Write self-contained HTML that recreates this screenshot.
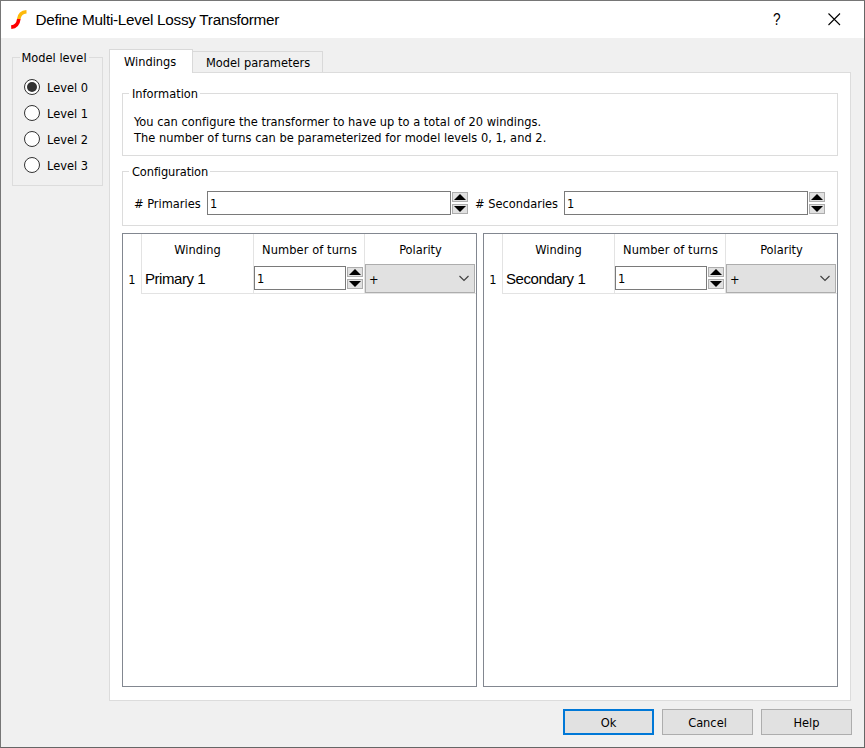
<!DOCTYPE html>
<html>
<head>
<meta charset="utf-8">
<title>Define Multi-Level Lossy Transformer</title>
<style>
html,body{margin:0;padding:0;}
body{width:865px;height:748px;overflow:hidden;background:#f0f0f0;position:relative;
  font-family:"DejaVu Sans Condensed","DejaVu Sans","Liberation Sans",sans-serif;font-size:12.7px;color:#000;}
.abs{position:absolute;box-sizing:border-box;}
.t{position:absolute;white-space:pre;line-height:16px;height:16px;}
.seg{font-family:"Liberation Sans",sans-serif;}
#win{left:0;top:0;width:865px;height:748px;border:1px solid #767676;border-right-color:#666;border-bottom-color:#666;}
#inner{left:1px;top:1px;width:863px;height:746px;border-right:1px solid #fafafa;border-bottom:1px solid #fafafa;}
#titlebar{left:1px;top:1px;width:863px;height:37px;background:#fff;}
.gb{border:1px solid #dcdcdc;}
.gbl{background:#f0f0f0;padding:0 3px;}
.gblw{background:#fff;padding:0 2px 0 3px;}
#pane{left:109px;top:72px;width:742px;height:629px;background:#fff;border:1px solid #dcdcdc;}
.tab{border:1px solid #d9d9d9;border-bottom:none;}
.spin{background:#fff;border:1px solid #7a7a7a;}
.sb{background:#e1e1e1;border:1px solid #adadad;width:16px;height:10px;}
.tbl{background:#fff;border:1px solid #828790;}
.vl{width:1px;background:#e3e3e3;}
.hl{height:1px;background:#e3e3e3;}
.combo{background:#e1e1e1;border:1px solid #adadad;}
.btn{background:#e1e1e1;border:1px solid #adadad;height:26px;width:91px;text-align:center;}
.radio{width:16px;height:16px;border-radius:50%;border:1px solid #333;background:#fff;}
.dot{width:10px;height:10px;border-radius:50%;background:#333;left:2px;top:2px;}
svg{position:absolute;overflow:visible;}
</style>
</head>
<body>
<!-- window chrome -->
<div class="abs" id="titlebar"></div>

<div class="abs" id="win"></div>

<!-- app icon -->
<svg style="left:0;top:0" width="40" height="38" viewBox="0 0 40 38">
  <defs>
    <clipPath id="cu"><rect x="0" y="0" width="40" height="19"/></clipPath>
    <clipPath id="cl"><rect x="0" y="19" width="40" height="19"/></clipPath>
  </defs>
  <path clip-path="url(#cl)" d="M11.2 27.1 C15.8 26.8 18.2 24.2 18.8 19 C19.4 14.2 22 11.9 26.5 11.7" fill="none" stroke="#fe0000" stroke-width="3.6"/>
  <path clip-path="url(#cu)" d="M11.2 27.1 C15.8 26.8 18.2 24.2 18.8 19 C19.4 14.2 22 11.9 26.5 11.7" fill="none" stroke="#fdb90b" stroke-width="3.6"/>
</svg>
<div class="t seg" id="title" style="left:35.5px;top:11px;font-size:15.3px;letter-spacing:-0.27px;line-height:18px;height:18px;">Define Multi-Level Lossy Transformer</div>

<!-- caption buttons -->
<div class="t seg" id="qm" style="left:773px;top:11px;font-size:17px;line-height:18px;height:18px;transform:scaleX(0.8);transform-origin:0 0;">?</div>
<svg style="left:0;top:0" width="865" height="38" viewBox="0 0 865 38">
  <path d="M828.5 13.5 L840 25 M840 13.5 L828.5 25" fill="none" stroke="#000" stroke-width="1.1"/>
</svg>

<!-- Model level group -->
<div class="abs gb" style="left:12px;top:57px;width:91px;height:129px;"></div>
<div class="t gbl" id="gl_model" style="left:20px;top:50px;padding:0 2px 0 1.5px;">Model level</div>

<div class="abs radio" style="left:24px;top:79px;"><div class="abs dot"></div></div>
<div class="t" id="lv0" style="left:47px;top:80px;">Level 0</div>
<div class="abs radio" style="left:24px;top:105px;"></div>
<div class="t" id="lv1" style="left:47px;top:106px;">Level 1</div>
<div class="abs radio" style="left:24px;top:131px;"></div>
<div class="t" id="lv2" style="left:47px;top:132px;">Level 2</div>
<div class="abs radio" style="left:24px;top:157px;"></div>
<div class="t" id="lv3" style="left:47px;top:158px;">Level 3</div>

<!-- Tabs -->
<div class="abs" id="pane"></div>
<div class="abs tab" style="left:192px;top:51px;width:131px;height:21px;background:#f0f0f0;border-left:none;"></div>
<div class="abs tab" style="left:109px;top:49px;width:84px;height:24px;background:#fff;"></div>
<div class="t" id="tab1" style="left:124px;top:54px;">Windings</div>
<div class="t" id="tab2" style="left:206px;top:55px;">Model parameters</div>

<!-- Information group -->
<div class="abs gb" style="left:122px;top:93px;width:716px;height:63px;"></div>
<div class="t gblw" id="gl_info" style="left:129px;top:86px;">Information</div>
<div class="t" id="info1" style="left:134px;top:114px;letter-spacing:0.025px;">You can configure the transformer to have up to a total of 20 windings.</div>
<div class="t" id="info2" style="left:134px;top:130px;letter-spacing:0.03px;">The number of turns can be parameterized for model levels 0, 1, and 2.</div>

<!-- Configuration group -->
<div class="abs gb" style="left:122px;top:171px;width:716px;height:55px;"></div>
<div class="t gblw" id="gl_conf" style="left:129px;top:164px;letter-spacing:-0.1px;">Configuration</div>
<div class="t" id="lprim" style="left:134px;top:196px;"># Primaries</div>
<div class="abs spin" style="left:207px;top:191px;width:244px;height:24px;"></div>
<div class="t" id="sp1" style="left:210px;top:196px;">1</div>
<div class="abs sb" style="left:452px;top:192px;"></div>
<div class="abs sb" style="left:452px;top:204px;"></div>
<div class="t" id="lsec" style="left:475px;top:196px;"># Secondaries</div>
<div class="abs spin" style="left:564px;top:191px;width:244px;height:24px;"></div>
<div class="t" id="sp2" style="left:567px;top:196px;">1</div>
<div class="abs sb" style="left:809px;top:192px;"></div>
<div class="abs sb" style="left:809px;top:204px;"></div>

<!-- Left table -->
<div class="abs tbl" style="left:122px;top:233px;width:355px;height:454px;"></div>
<div class="abs vl" style="left:141px;top:234px;height:60px;"></div>
<div class="abs vl" style="left:253px;top:234px;height:60px;"></div>
<div class="abs vl" style="left:364px;top:234px;height:60px;"></div>
<div class="abs hl" style="left:141px;top:293px;width:335px;"></div>
<div class="t" id="h1a" style="left:142px;top:242px;width:111px;text-align:center;">Winding</div>
<div class="t" id="h1b" style="left:254px;top:242px;width:111px;text-align:center;letter-spacing:0.1px;">Number of turns</div>
<div class="t" id="h1c" style="left:365px;top:242px;width:111px;text-align:center;">Polarity</div>
<div class="t" id="r1" style="left:123px;top:272px;width:18px;text-align:center;">1</div>
<div class="t seg" id="p1" style="left:145px;top:270px;font-size:15px;letter-spacing:-0.45px;line-height:18px;height:18px;">Primary 1</div>
<div class="abs spin" style="left:254px;top:266px;width:92px;height:24px;"></div>
<div class="t" id="c1" style="left:257px;top:271px;">1</div>
<div class="abs sb" style="left:347px;top:267px;"></div>
<div class="abs sb" style="left:347px;top:279px;"></div>
<div class="abs combo" style="left:365px;top:264px;width:110px;height:29px;"></div>
<div class="t" id="pl1" style="left:369px;top:272px;">+</div>

<!-- Right table -->
<div class="abs tbl" style="left:483px;top:233px;width:355px;height:454px;"></div>
<div class="abs vl" style="left:502px;top:234px;height:60px;"></div>
<div class="abs vl" style="left:614px;top:234px;height:60px;"></div>
<div class="abs vl" style="left:725px;top:234px;height:60px;"></div>
<div class="abs hl" style="left:502px;top:293px;width:335px;"></div>
<div class="t" id="h2a" style="left:503px;top:242px;width:111px;text-align:center;">Winding</div>
<div class="t" id="h2b" style="left:615px;top:242px;width:111px;text-align:center;letter-spacing:0.1px;">Number of turns</div>
<div class="t" id="h2c" style="left:726px;top:242px;width:111px;text-align:center;">Polarity</div>
<div class="t" id="r2" style="left:484px;top:272px;width:18px;text-align:center;">1</div>
<div class="t seg" id="s1" style="left:506px;top:270px;font-size:15px;letter-spacing:-0.45px;line-height:18px;height:18px;">Secondary 1</div>
<div class="abs spin" style="left:615px;top:266px;width:92px;height:24px;"></div>
<div class="t" id="c2" style="left:618px;top:271px;">1</div>
<div class="abs sb" style="left:708px;top:267px;"></div>
<div class="abs sb" style="left:708px;top:279px;"></div>
<div class="abs combo" style="left:726px;top:264px;width:110px;height:29px;"></div>
<div class="t" id="pl2" style="left:730px;top:272px;">+</div>

<!-- arrows and chevrons -->
<svg style="left:0;top:0" width="865" height="748" viewBox="0 0 865 748">
  <g fill="#000">
    <polygon points="454,200 466,200 460,194"/>
    <polygon points="454,206 466,206 460,212"/>
    <polygon points="811,200 823,200 817,194"/>
    <polygon points="811,206 823,206 817,212"/>
    <polygon points="349,275 361,275 355,269"/>
    <polygon points="349,281 361,281 355,287"/>
    <polygon points="710,275 722,275 716,269"/>
    <polygon points="710,281 722,281 716,287"/>
  </g>
  <g fill="none" stroke="#404040" stroke-width="1.15">
    <polyline points="459.5,276 464,280.5 468.5,276"/>
    <polyline points="820.5,276 825,280.5 829.5,276"/>
  </g>
</svg>

<!-- Buttons -->
<div class="abs btn" style="left:563px;top:709px;border:2px solid #0078d7;"></div>
<div class="abs btn" style="left:662px;top:709px;"></div>
<div class="abs btn" style="left:761px;top:709px;"></div>
<div class="t" id="bok" style="left:563px;top:715px;width:91px;text-align:center;">Ok</div>
<div class="t" id="bcancel" style="left:662px;top:715px;width:91px;text-align:center;">Cancel</div>
<div class="t" id="bhelp" style="left:761px;top:715px;width:91px;text-align:center;">Help</div>
</body>
</html>
